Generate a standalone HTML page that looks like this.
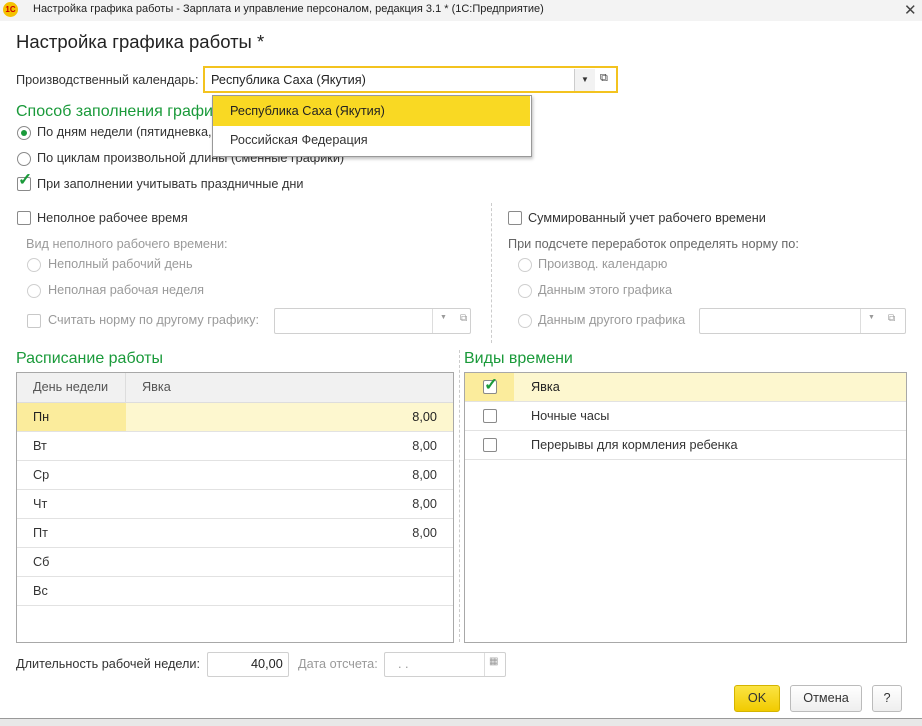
<!DOCTYPE html>
<html><head><meta charset="utf-8"><style>
body{margin:0;width:922px;height:726px;background:#e8e8e8;font-family:"Liberation Sans",Arial,sans-serif;font-size:12.7px;color:#333;position:relative;overflow:hidden}
.a{position:absolute;white-space:nowrap}
.g{color:#9a9a9a}
.grn{color:#1a9a3a;font-size:16px}
.cb{position:absolute;width:12px;height:12px;border:1px solid #8a8a8a;border-radius:2px;background:#fff}
.cb.d{border-color:#c8c8c8}
.rb{position:absolute;width:12px;height:12px;border:1px solid #8a8a8a;border-radius:50%;background:#fff}
.rb.d{border-color:#cfcfcf}
.fld{position:absolute;border:1px solid #d0d0d0;border-radius:2px;background:#fff}
.tbl{position:absolute;border:1px solid #a8a8a8;background:#fff}
.row{position:absolute;left:0;right:0;height:28px;border-bottom:1px solid #e2e2e2;line-height:28px}
</style></head><body>
<div class="a" style="left:0;top:0;width:922px;height:718px;background:#fff;border-bottom:1px solid #999"></div>
<div class="a" style="left:0;top:0;width:922px;height:21px;background:#f3f3f3"></div>
<div class="a" style="left:3px;top:2px;width:15px;height:15px;border-radius:50%;background:#f5c200;font-size:8px;color:#c00;font-weight:bold;line-height:15px;text-align:center">1С</div>
<div class="a" style="left:33px;top:3px;font-size:11px;color:#222">Настройка графика работы - Зарплата и управление персоналом, редакция 3.1 *  (1С:Предприятие)</div>
<div class="a" style="left:904px;top:1px;font-size:15px;color:#444">✕</div>
<div class="a" style="left:16px;top:31px;font-size:18.5px;color:#222">Настройка графика работы *</div>
<div class="a" style="left:16px;top:73px">Производственный календарь:</div>
<div class="a" style="left:203px;top:66px;width:415px;height:27px;border:2px solid #f3c31f;box-sizing:border-box;background:#fff"></div>
<div class="a" style="left:211px;top:73px;color:#222">Республика Саха (Якутия)</div>
<div class="a" style="left:574px;top:69px;width:20px;height:22px;background:#f2f2f2;border-left:1px solid #ccc;font-size:8px;text-align:center;line-height:22px">▼</div>
<div class="a" style="left:600px;top:72px;font-size:11px">⧉</div>
<div class="a grn" style="left:16px;top:103px">Способ заполнения графика</div>
<div class="rb" style="left:17px;top:126px"></div><div class="a" style="left:21px;top:130px;width:6px;height:6px;border-radius:50%;background:#1a9a3a"></div>
<div class="a" style="left:37px;top:125px">По дням недели (пятидневка, ...</div>
<div class="rb" style="left:17px;top:152px"></div>
<div class="a" style="left:37px;top:151px">По циклам произвольной длины (сменные графики)</div>
<div class="cb" style="left:17px;top:177px"></div><div class="a" style="left:18px;top:170px;color:#1a9a3a;font-size:17px;font-weight:bold">✓</div>
<div class="a" style="left:37px;top:177px">При заполнении учитывать праздничные дни</div>
<div class="a" style="left:212px;top:95px;width:318px;height:60px;border:1px solid #999;background:#fff;box-shadow:1px 2px 3px rgba(0,0,0,.25)"></div>
<div class="a" style="left:213px;top:96px;width:317px;height:30px;background:#f9d923"></div>
<div class="a" style="left:230px;top:104px;color:#222">Республика Саха (Якутия)</div>
<div class="a" style="left:230px;top:133px;color:#333">Российская Федерация</div>
<div class="a" style="left:491px;top:203px;height:140px;border-left:1px dashed #ccc"></div>
<div class="cb" style="left:17px;top:211px"></div>
<div class="a" style="left:37px;top:211px">Неполное рабочее время</div>
<div class="a g" style="left:26px;top:237px">Вид неполного рабочего времени:</div>
<div class="rb d" style="left:27px;top:258px"></div><div class="a g" style="left:48px;top:257px">Неполный рабочий день</div>
<div class="rb d" style="left:27px;top:284px"></div><div class="a g" style="left:48px;top:283px">Неполная рабочая неделя</div>
<div class="cb d" style="left:27px;top:314px"></div><div class="a g" style="left:48px;top:313px">Считать норму по другому графику:</div>
<div class="fld" style="left:274px;top:308px;width:195px;height:24px"></div>
<div class="a" style="left:432px;top:309px;height:24px;border-left:1px solid #ddd"></div>
<div class="a g" style="left:440px;top:314px;font-size:7px">▼</div><div class="a g" style="left:460px;top:313px;font-size:10px">⧉</div>
<div class="cb" style="left:508px;top:211px"></div>
<div class="a" style="left:528px;top:211px">Суммированный учет рабочего времени</div>
<div class="a" style="left:508px;top:237px;color:#666">При подсчете переработок определять норму по:</div>
<div class="rb d" style="left:518px;top:258px"></div><div class="a g" style="left:538px;top:257px">Производ. календарю</div>
<div class="rb d" style="left:518px;top:284px"></div><div class="a g" style="left:538px;top:283px">Данным этого графика</div>
<div class="rb d" style="left:518px;top:314px"></div><div class="a g" style="left:538px;top:313px">Данным другого графика</div>
<div class="fld" style="left:699px;top:308px;width:205px;height:24px"></div>
<div class="a" style="left:860px;top:309px;height:24px;border-left:1px solid #ddd"></div>
<div class="a g" style="left:868px;top:314px;font-size:7px">▼</div><div class="a g" style="left:888px;top:313px;font-size:10px">⧉</div>
<div class="a grn" style="left:16px;top:350px">Расписание работы</div>
<div class="a grn" style="left:464px;top:350px">Виды времени</div>
<div class="a" style="left:459px;top:350px;height:292px;border-left:1px dashed #ccc"></div>
<div class="tbl" style="left:16px;top:372px;width:436px;height:269px">
<div class="row" style="top:0;height:29px;background:#f1f1f1;border-bottom:1px solid #ddd;color:#555;line-height:29px"><span class="a" style="left:16px">День недели</span><span class="a" style="left:108px;top:0;height:29px;border-left:1px solid #ddd"></span><span class="a" style="left:125px">Явка</span></div>
<div class="row" style="top:30px;background:#fdf7cf"><span class="a" style="left:0;top:0;width:109px;height:28px;background:#fbec9c"></span><span class="a" style="left:16px;color:#222">Пн</span><span class="a" style="right:16px;color:#222">8,00</span></div>
<div class="row" style="top:59px"><span class="a" style="left:16px">Вт</span><span class="a" style="right:16px">8,00</span></div>
<div class="row" style="top:88px"><span class="a" style="left:16px">Ср</span><span class="a" style="right:16px">8,00</span></div>
<div class="row" style="top:117px"><span class="a" style="left:16px">Чт</span><span class="a" style="right:16px">8,00</span></div>
<div class="row" style="top:146px"><span class="a" style="left:16px">Пт</span><span class="a" style="right:16px">8,00</span></div>
<div class="row" style="top:175px"><span class="a" style="left:16px">Сб</span></div>
<div class="row" style="top:204px"><span class="a" style="left:16px">Вс</span></div>
</div>
<div class="tbl" style="left:464px;top:372px;width:441px;height:269px">
<div class="row" style="top:0;background:#fdf7cf"><span class="a" style="left:0;top:0;width:49px;height:28px;background:#fbec9c"></span><span class="cb" style="left:18px;top:7px"></span><span class="a" style="left:19px;top:-2px;color:#1a9a3a;font-size:17px;font-weight:bold">✓</span><span class="a" style="left:66px;color:#222">Явка</span></div>
<div class="row" style="top:29px"><span class="cb" style="left:18px;top:7px"></span><span class="a" style="left:66px">Ночные часы</span></div>
<div class="row" style="top:58px"><span class="cb" style="left:18px;top:7px"></span><span class="a" style="left:66px">Перерывы для кормления ребенка</span></div>
</div>
<div class="a" style="left:16px;top:657px">Длительность рабочей недели:</div>
<div class="fld" style="left:207px;top:652px;width:80px;height:23px"></div>
<div class="a" style="left:251px;top:657px;color:#222">40,00</div>
<div class="a g" style="left:298px;top:657px">Дата отсчета:</div>
<div class="fld" style="left:384px;top:652px;width:120px;height:23px"></div>
<div class="a" style="left:484px;top:653px;height:23px;border-left:1px solid #ddd"></div>
<div class="a g" style="left:398px;top:657px">.  .</div>
<div class="a g" style="left:489px;top:656px;font-size:10px">▦</div>
<div class="a" style="left:734px;top:685px;width:46px;height:27px;box-sizing:border-box;border:1px solid #d4b400;border-radius:3px;background:linear-gradient(#fbe443,#f1cb00);text-align:center;line-height:25px;color:#333">OK</div>
<div class="a" style="left:790px;top:685px;width:72px;height:27px;box-sizing:border-box;border:1px solid #bbb;border-radius:3px;background:linear-gradient(#fff,#eee);text-align:center;line-height:25px">Отмена</div>
<div class="a" style="left:872px;top:685px;width:30px;height:27px;box-sizing:border-box;border:1px solid #bbb;border-radius:3px;background:linear-gradient(#fff,#eee);text-align:center;line-height:25px">?</div>
</body></html>
